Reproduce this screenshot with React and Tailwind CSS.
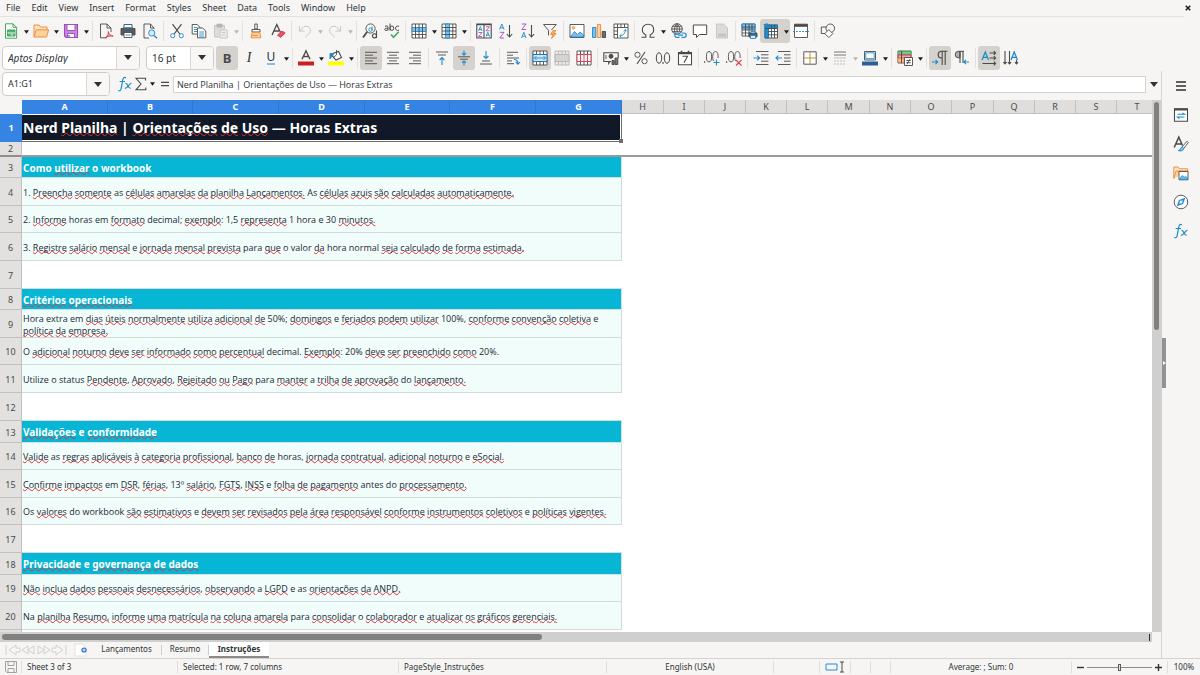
import React from "react";

const D = "#4a4a48";
const B = "#1e8bcd";
const L = "#83beec";
const O = "#ed8733";
const G = "#c4c2c0";

function Icon({ children, box = 16 }) {
  return (
    <svg
      viewBox={`0 0 ${box} ${box}`}
      className="size-4 shrink-0 overflow-visible"
      fill="none"
      stroke={D}
      strokeWidth="0.9"
      aria-hidden="true"
    >
      {children}
    </svg>
  );
}

const icons = {
  newDoc: (
    <Icon>
      <path d="M2.5.8H10L13.6 4.4V15.2H2.5Z" fill="#fff" stroke="#2f9e4f" />
      <path d="M10 .8V4.4H13.6" stroke="#2f9e4f" />
      <path d="M4.5 7H12V13H4.5Z" fill="#54b46b" stroke="#2f9e4f" />
      <path d="M4.5 10H12" stroke="#fff" />
      <path d="M7.5 12H10" stroke="#fff" />
    </Icon>
  ),
  open: (
    <Icon>
      <path d="M1 14V2H6L7.5 4H14V7" fill="#fde3c2" stroke={O} />
      <path d="M1 14L3.2 6.8H15.6L13.6 14Z" fill="#fbd29b" stroke={O} />
    </Icon>
  ),
  save: (
    <Icon>
      <path d="M1.5 1.5H14.5V14.5H3L1.5 13Z" fill="#c988dd" stroke="#9a4bb8" strokeWidth="1.1" />
      <path d="M4 1.5H12V7.5H4Z" fill="#fff" stroke="#9a4bb8" />
      <path d="M4.5 10.5H11.5V14.5H4.5Z" fill="#fff" stroke="#9a4bb8" />
      <path d="M6 12V14" stroke="#9a4bb8" strokeWidth="1.3" />
    </Icon>
  ),
  pdf: (
    <Icon>
      <path d="M8.8 14.8H2.5V1H9L13 5V9M9 1V5H13" />
      <path d="M7 15C10 13 10.5 10.5 10.3 8.5C11 11.5 12.5 13 15.2 13C12.5 12.6 9.5 13.2 7 15Z" stroke="#d9374a" fill="#f3a6ae" />
    </Icon>
  ),
  print: (
    <Icon>
      <path d="M4 1.5H12V6H4Z" fill="#fff" />
      <path d="M1 5.5H15V12H1Z" fill="#57575a" />
      <path d="M3 4.8H13" stroke={B} strokeWidth="1.3" />
      <path d="M4 9.5H12V14.5H4Z" fill="#fff" />
      <path d="M5.5 12H10.5" stroke={B} />
    </Icon>
  ),
  preview: (
    <Icon>
      <path d="M12 6V5L8.5 1H2V15H7M8.5 1V5H12" />
      <circle cx="9.7" cy="10" r="3.1" stroke={B} fill="#d7ecfa" />
      <path d="M12 12.4L15 15.3" stroke={B} strokeWidth="1.4" />
    </Icon>
  ),
  cut: (
    <Icon>
      <path d="M3.5 1.2L10.8 11M12.5 1.2L5.2 11" strokeWidth="1.2" />
      <circle cx="3.7" cy="12.7" r="2.1" stroke={B} />
      <circle cx="12.3" cy="12.7" r="2.1" stroke={B} />
    </Icon>
  ),
  copy: (
    <Icon>
      <path d="M6 11H1.2V1.5H6L9 4.3V5" fill="#fff" />
      <path d="M3 4.5H6M3 6.5H6M3 8.5H6" stroke={B} />
      <path d="M6.5 5H11.5L14.8 8V14.8H6.5Z" fill="#fff" />
      <path d="M8.2 9H13M8.2 11H13M8.2 13H13" stroke={B} />
    </Icon>
  ),
  paste: (
    <Icon>
      <path d="M6 14H1.5V2.5H11.5V6" fill="#dedddb" stroke={G} />
      <path d="M4 1.2H9V4H4Z" fill="#b8b6b4" stroke="#b0aeac" />
      <path d="M7 7H14.2V15H7Z" fill="#efeeec" stroke={G} />
      <path d="M8.8 9.5H12.5M8.8 12H12.5" stroke={G} />
    </Icon>
  ),
  clone: (
    <Icon>
      <path d="M6.8 1H9.2V6H6.8ZM4 6.5H12V9H4Z" fill="#fff" />
      <path d="M4.2 9.3H11.8L12.8 14.8H3Z" fill="#fbd29b" stroke={O} />
      <path d="M4.5 12.5H10" stroke={O} />
    </Icon>
  ),
  clearFormat: (
    <Icon>
      <path d="M2 12L6.8 1.5L10.5 9.5M4 8H9" strokeWidth="1.3" />
      <path d="M7.5 12.2L12 8L15.2 10L10.6 14.4Z" fill="#e25563" stroke="#d9374a" />
    </Icon>
  ),
  undo: (
    <Icon>
      <path d="M2.5 3V8H7.5M2.5 8L6.5 4.2C9.5 2 13.5 4 13.5 7.5C13.5 10 11 11.5 8 14.5" stroke={G} />
    </Icon>
  ),
  redo: (
    <Icon>
      <path d="M13.5 3V8H8.5M13.5 8L9.5 4.2C6.5 2 2.5 4 2.5 7.5C2.5 10 5 11.5 8 14.5" stroke={G} />
    </Icon>
  ),
  find: (
    <Icon>
      <circle cx="8.5" cy="5.5" r="4.6" />
      <path d="M5.2 8.8L1 14.5" strokeWidth="1.8" />
      <path d="M10 3.5V7.8M10 6A1.6 1.8 0 1 1 7 6A1.6 1.8 0 0 1 10 6" stroke={B} />
      <path d="M14.5 7.5V15M14.5 12.8A2 2.1 0 1 1 10.5 12.8A2 2.1 0 0 1 14.5 12.8" strokeWidth="1.1" />
    </Icon>
  ),
  spell: (
    <Icon>
      <path d="M1 3.4C3 2.4 4 3 4 4.4V7.4M4 5.2C2 5 .8 5.4 .8 6.4C.8 7.8 3 7.8 4 6.4M6 .5V7.5M6 5.2A1.9 2.2 0 1 1 9.8 5.2A1.9 2.2 0 0 1 6 5.2M15 3.3C13 2.5 11.6 3.5 11.6 5.2C11.6 7 13 8 15 7.1" strokeWidth="1" />
      <path d="M7 11.5L9.5 14.3L14.8 8.8" stroke="#3fae5b" strokeWidth="1.6" />
    </Icon>
  ),
  row: (
    <Icon>
      <path d="M1 1H15V15H1Z" fill="#fff" />
      <path d="M1 4.5H15V8.5H1Z" fill={L} stroke={B} />
      <path d="M1 11.5H15M4.5 1V15M8 1V15M11.5 1V15" />
    </Icon>
  ),
  col: (
    <Icon>
      <path d="M1 1H15V15H1Z" fill="#fff" />
      <path d="M4.5 1H8.5V15H4.5Z" fill={L} stroke={B} />
      <path d="M11.8 1V15M1 4.5H15M1 8H15M1 11.5H15" />
    </Icon>
  ),
  sort: (
    <Icon>
      <path d="M.8 1H15.2V15H.8ZM8 1V15M.8 1.8H15.2" strokeWidth="1.1" fill="#fff" />
      <path d="M2.5 8L4.3 3.5L6 8M3 6.5H5.6M10 13.6L11.8 9.2L13.6 13.6M10.5 12.2H13" stroke={B} />
      <path d="M2.5 9.5H6L2.5 13.6H6M10 3.8H13.5L10 7.8H13.5" stroke="#a34ab8" />
    </Icon>
  ),
  asc: (
    <Icon>
      <path d="M1.5 6.5L3.8 1L6 6.5M2.3 4.8H5.2" stroke={B} />
      <path d="M1.8 9.3H6L1.8 15H6.2" stroke="#a34ab8" />
      <path d="M11.5 2V14M8.8 11L11.5 14L14.2 11" strokeWidth="1.1" />
    </Icon>
  ),
  desc: (
    <Icon>
      <path d="M1.8 1H6L1.8 6.5H6.2" stroke="#a34ab8" />
      <path d="M1.5 15L3.8 9.3L6 15M2.3 13.2H5.2" stroke={B} />
      <path d="M11.5 2V14M8.8 11L11.5 14L14.2 11" strokeWidth="1.1" />
    </Icon>
  ),
  filter: (
    <Icon>
      <path d="M6.5 12.5V7.3L1.5 1.5H14.3L9.5 7" />
      <path d="M11 7.5L8.5 11.5H11L9.5 15.5L14 10.5H11.5L13.8 7.5Z" fill="#f9b467" stroke={O} />
    </Icon>
  ),
  image: (
    <Icon>
      <path d="M1 1.5H15V14.5H1Z" fill="#fff" />
      <path d="M1.5 14L5.5 8.5L8.5 11.5L11 9L14.5 12V14Z" fill={L} stroke={B} />
      <circle cx="4.5" cy="4.8" r="1.3" fill="#fbd29b" stroke={O} />
    </Icon>
  ),
  chart: (
    <Icon>
      <path d="M1.5 4.5H4.8V14.5H1.5Z" fill={L} stroke={B} />
      <path d="M6.3 1.5H9.6V14.5H6.3Z" fill="#fbd29b" stroke={O} />
      <path d="M11.2 8.5H14.5V14.5H11.2Z" fill="#6a6a6a" />
    </Icon>
  ),
  pivot: (
    <Icon>
      <path d="M1 1H15V15H1ZM4.5 1V15M1 4.5H15M8 1V4.5M11.5 1V4.5M1 8H4.5M1 11.5H4.5" fill="#fff" />
      <path d="M7 12.8C10.5 12.8 12.3 10 12.3 6.8M10.6 8.3L12.3 6.4L14 8.3M8.6 11L6.7 12.8L8.6 14.4" stroke={B} />
    </Icon>
  ),
  omega: (
    <Icon>
      <path d="M1.5 14.3H5.8V12C3.5 10.8 2.3 9 2.3 6.8C2.3 3.5 4.6 1.3 8 1.3S13.7 3.5 13.7 6.8C13.7 9 12.5 10.8 10.2 12V14.3H14.5" strokeWidth="1.1" />
    </Icon>
  ),
  link: (
    <Icon>
      <circle cx="7" cy="6" r="5.3" />
      <path d="M1.7 6H12.3M2.5 3.3H11.5M2.5 8.7H11M7 .7V9M7 .7C3.5 4 4.5 9 5 10M7 .7C9.8 3.4 9.8 6 9.5 8" />
      <path d="M9.5 10H7A2 2 0 0 0 7 14.3H9.5M11.5 10H14A2 2 0 0 1 14 14.3H11.5M8 12.2H13" stroke={B} strokeWidth="1.2" />
    </Icon>
  ),
  comment: (
    <Icon>
      <path d="M1.3 2H14.7V11.5H7.5L4.5 14.5V11.5H1.3Z" fill="#fff" strokeWidth="1" />
    </Icon>
  ),
  header: (
    <Icon>
      <path d="M2.5 1H9.5L13.5 5V15H2.5Z" fill="#dddbd9" stroke={G} />
      <path d="M4.5 11H11.5V13.2H4.5Z" fill="#c8c6c4" stroke={G} />
    </Icon>
  ),
  printArea: (
    <Icon>
      <path d="M1 1H14V13H1Z" fill="#fff" />
      <path d="M1 1H14V6H1Z" fill={L} stroke={B} />
      <path d="M1 4H14M1 7H14M1 10H14M4.5 1V13M8 1V13M11 1V13" />
      <path d="M8 10H16V14H8Z" fill="#5c5c5c" />
      <path d="M9.5 12.5H14.5V15.5H9.5ZM9.8 8.5H14V10H9.8Z" fill="#d7ecfa" stroke={B} />
    </Icon>
  ),
  freeze: (
    <Icon>
      <path d="M2 2H14.5V15H2Z" fill="#fff" />
      <path d="M2 2H14.5V5.5H5.5V15H2Z" fill={B} stroke="#1a6fae" />
      <path d="M5.5 8.5H14.5M5.5 11.8H14.5M8.5 2V15M11.5 2V15M2 5.5H14.5" />
      <path d="M.5 1.5H5M3 0V5M1 3.5L5 .5" stroke={B} />
    </Icon>
  ),
  split: (
    <Icon>
      <path d="M1.5 1.2H14.5V14.5H1.5Z" fill="#fff" />
      <path d="M1.5 2.5H14.5" strokeWidth="2.6" />
      <path d="M0 8.5H16" stroke={B} strokeDasharray="2 1" />
    </Icon>
  ),
  shapes: (
    <Icon>
      <path d="M7 10.5H1.3V4H6.5" />
      <circle cx="10.3" cy="5.3" r="4.3" />
      <path d="M8.8 6.6L12.8 10.6L8.8 14.6L4.8 10.6Z" fill="#fff" />
    </Icon>
  ),
  fontColor: (
    <Icon>
      <path d="M4 9.3L8 .8L12 9.3M5.4 6.5H10.6" strokeWidth="1.4" />
      <path d="M0 13.5H16" stroke="#c9211e" strokeWidth="4" />
    </Icon>
  ),
  highlight: (
    <Icon>
      <path d="M5 3.5L10.5 1.5L13.5 7.5L8 10L4.5 6Z" fill="#fff" strokeWidth="1.1" />
      <path d="M8.5 4.8V0M8.5 4.8L5 8" />
      <path d="M2 9V3.5H5V5.5C3.6 6 3 7.5 2 9Z" fill={B} stroke={B} />
      <path d="M0 13.5H16" stroke="#ffff00" strokeWidth="4" />
    </Icon>
  ),
  left: (
    <Icon>
      <path d="M2 2.3H14M2 5.2H10M2 8H14M2 10.9H10M2 13.7H14" />
    </Icon>
  ),
  center: (
    <Icon>
      <path d="M2 2.3H14M4 5.2H12M2 8H14M4 10.9H12M2 13.7H14" />
    </Icon>
  ),
  right: (
    <Icon>
      <path d="M2 2.3H14M6 5.2H14M2 8H14M6 10.9H14M2 13.7H14" />
    </Icon>
  ),
  top: (
    <Icon>
      <path d="M2 2H14M4 5H12" />
      <path d="M8 15V7.5M5.6 10L8 7.5L10.4 10" stroke={B} strokeWidth="1.1" />
    </Icon>
  ),
  middle: (
    <Icon>
      <path d="M2 6.8H14M4 9.2H12" />
      <path d="M8 .5V5M6 3.2L8 5.2L10 3.2M8 15.5V11M6 12.8L8 10.8L10 12.8" stroke={B} strokeWidth="1.1" />
    </Icon>
  ),
  bottom: (
    <Icon>
      <path d="M4 11H12M2 14H14" />
      <path d="M8 1V8.5M5.6 6L8 8.5L10.4 6" stroke={B} strokeWidth="1.1" />
    </Icon>
  ),
  wrap: (
    <Icon>
      <path d="M2 2.3H13M2 5.2H8M2 8H14M2 10.9H7M2 13.7H9" />
      <path d="M9 9.5C12 9.5 13 11 13 14M10.8 12L13 14.3L15 12" stroke={B} strokeWidth="1.1" />
    </Icon>
  ),
  merge: (
    <Icon>
      <path d="M1 1H15V15H1ZM1 4.5H15M1 11.5H15M4.5 1V4.5M8 1V4.5M11.5 1V4.5M4.5 11.5V15M8 11.5V15M11.5 11.5V15" fill="#fff" />
      <path d="M1 4.5H15V11.5H1Z" fill="#cfe6f8" stroke="#1a6fae" />
      <path d="M2.5 8H13.5M4.5 6L2.5 8L4.5 10M11.5 6L13.5 8L11.5 10" stroke={B} />
    </Icon>
  ),
  mergeCells: (
    <Icon>
      <path d="M1 1H15V15H1ZM1 4.5H15M1 11.5H15M4.5 1V4.5M8 1V4.5M11.5 1V4.5M4.5 11.5V15M8 11.5V15M11.5 11.5V15" fill="#eceae8" stroke="#b9b7b5" />
      <path d="M1 4.5H15V11.5H1Z" fill="#d5d3d1" stroke="#b9b7b5" />
    </Icon>
  ),
  unmerge: (
    <Icon>
      <path d="M1 1H15V15H1ZM1 4.5H15M1 11.5H15M4.5 1V4.5M8 1V4.5M11.5 1V4.5M4.5 11.5V15M8 11.5V15M11.5 11.5V15" fill="#fff" />
      <path d="M1 4.5H15V11.5H1ZM4.5 4.5V11.5M8 4.5V11.5M11.5 4.5V11.5" stroke="#d9374a" fill="#fff" />
    </Icon>
  ),
  currency: (
    <Icon>
      <path d="M8 11.5H.8V2.8H15.2V8" strokeWidth="1.1" />
      <circle cx="8" cy="6.3" r="2" fill={D} />
      <path d="M3 5V9M9 14.5V10.5H11.2V14.5ZM12 14.5V8H14.8V14.5ZM5.5 14.5V11.5H8" fill="#77767b" />
    </Icon>
  ),
  percent: (
    <Icon>
      <circle cx="4.5" cy="4.8" r="2.6" />
      <circle cx="11.5" cy="11.2" r="2.6" />
      <path d="M12 2L4 14" strokeWidth="1.1" />
    </Icon>
  ),
  number: (
    <Icon>
      <ellipse cx="4" cy="8" rx="2.7" ry="5.3" strokeWidth="1" />
      <ellipse cx="12" cy="8" rx="2.7" ry="5.3" strokeWidth="1" />
      <path d="M8 12V14" strokeWidth="1.1" />
    </Icon>
  ),
  date: (
    <Icon>
      <path d="M1.5 2.5H14.5V14.8H1.5Z" fill="#fff" strokeWidth="1.1" />
      <path d="M1.5 3.5H14.5M4.5 .8V3M11.5 .8V3" strokeWidth="1.6" />
      <path d="M5.5 6.3H10.5L7 12.8" strokeWidth="1.1" />
    </Icon>
  ),
  addDec: (
    <Icon>
      <ellipse cx="5" cy="6.7" rx="2.6" ry="5.2" />
      <path d="M9.5 11C8 8 8.5 1.5 11.5 1.5C13.8 1.5 14.4 5 14 8M.7 11V13" />
      <path d="M12.5 9.5V15.5M9.5 12.5H15.5" stroke={B} strokeWidth="1.1" />
    </Icon>
  ),
  delDec: (
    <Icon>
      <ellipse cx="5" cy="6.7" rx="2.6" ry="5.2" />
      <path d="M9.5 11C8 8 8.5 1.5 11.5 1.5C13.8 1.5 14.4 5 14 8M.7 11V13" />
      <path d="M10 10L15.5 15.5M15.5 10L10 15.5" stroke="#e0404f" strokeWidth="1.1" />
    </Icon>
  ),
  indent: (
    <Icon>
      <path d="M3 1.5H15.5M8 4.8H15.5M8 8H15.5M8 11.2H15.5M3 14.5H15.5" />
      <path d="M.5 8H6.5M4.2 5.7L6.5 8L4.2 10.3" stroke={B} strokeWidth="1.1" />
    </Icon>
  ),
  outdent: (
    <Icon>
      <path d="M3 1.5H15.5M9 4.8H15.5M9 8H15.5M9 11.2H15.5M3 14.5H15.5" />
      <path d="M7 8H1M3.3 5.7L1 8L3.3 10.3" stroke={B} strokeWidth="1.1" />
    </Icon>
  ),
  borders: (
    <Icon>
      <path d="M1.8 1.8H14.2V14.2H1.8Z" fill="#fff" />
      <path d="M8 1.8V14.2M1.8 8H14.2" stroke="#b8862d" />
    </Icon>
  ),
  lineStyle: (
    <Icon>
      <path d="M2 2H14M2 5H14" stroke="#a3a1a0" strokeWidth="1.4" />
      <path d="M2 8H14" stroke="#b9b7b5" />
      <path d="M2 11H14M2 14H14" stroke="#b9b7b5" strokeDasharray="2 1" />
    </Icon>
  ),
  borderColor: (
    <Icon>
      <path d="M2.5 1.5H13.5V10H2.5Z" fill="#fff" />
      <path d="M3.8 2.8H12.2V8.7H3.8Z" stroke={B} />
      <path d="M0 13.5H16" stroke="#2a6099" strokeWidth="4" />
    </Icon>
  ),
  cond: (
    <Icon>
      <path d="M1 1H14V13H1Z" fill="#fff" />
      <path d="M1 1.5H14V4.5H1Z" fill="#77c58a" stroke="#3fae5b" />
      <path d="M1 5H14V8H1Z" fill="#f5a3aa" stroke="#d9374a" />
      <path d="M1 9H7V12H1Z" fill="#fbd29b" stroke={O} />
      <path d="M4.5 1V13" />
      <path d="M7.5 7.5H15.5V15.5H7.5Z" fill="#fff" />
      <path d="M9.3 10.5H13.7M9.3 12.7H13.7M13 9L10 14.3" />
    </Icon>
  ),
  ltr: (
    <Icon>
      <path d="M15.5 1.3H9A3.4 3.4 0 0 0 9 8H10.2M10.2 1.3V15M13.2 1.3V15" strokeWidth="1.1" />
      <path d="M0 12H5.5M3.5 9.8L5.7 12L3.5 14.2" stroke={B} strokeWidth="1.1" />
    </Icon>
  ),
  rtl: (
    <Icon>
      <path d="M10 1.3H4.5A3.2 3.2 0 0 0 4.5 7.8H6V1.5" fill="#b5b3b0" strokeWidth="1" />
      <path d="M6 1.3V13M9 1.3V13" strokeWidth="1.1" />
      <path d="M15 12H10M12 9.8L9.8 12L12 14.2" stroke={B} strokeWidth="1.1" />
    </Icon>
  ),
  textH: (
    <Icon>
      <path d="M1 10L4.3 2L7.5 10M2.3 7.3H6.3" stroke={B} strokeWidth="1.3" />
      <path d="M8.5 3H14.5M8.5 8H14.5M1.5 13.5H14.5M12.8 1.2L14.6 3L12.8 4.8M12.8 6.2L14.6 8L12.8 9.8M12.8 11.7L14.6 13.5L12.8 15.3" strokeWidth="1.1" />
    </Icon>
  ),
  textV: (
    <Icon>
      <path d="M8 10L11.2 2L14.5 10M9.3 7.3H13.3" stroke={B} strokeWidth="1.3" />
      <path d="M2 1V14M6.5 1V14M13.5 10V14M.4 12.2L2 14L3.6 12.2M4.9 12.2L6.5 14L8.1 12.2M11.9 12.2L13.5 14L15.1 12.2" strokeWidth="1.1" />
    </Icon>
  ),
  fx: (
    <Icon>
      <path d="M9 1.8C6.8 .5 6 2.2 5.6 4.6L4.2 12.3C3.8 14.5 2.8 15.3 1.2 14.4M2.6 5.5H8" stroke={B} strokeWidth="1.2" />
      <path d="M8.5 7.5C11 6.8 10.8 12.8 13.8 12.2M14.5 7.3C12 7 10.5 12.8 7.8 12.4" stroke={B} strokeWidth="1.2" />
    </Icon>
  ),
  sum: (
    <Icon>
      <path d="M12.5 4.5V2.3H3L8 8L3 13.8H12.8V11.5" strokeWidth="1.1" />
    </Icon>
  ),
  equals: (
    <Icon>
      <path d="M4 6.3H12M4 9.7H12" strokeWidth="1.3" />
    </Icon>
  ),
  burger: (
    <Icon>
      <path d="M3 4H13M3 8H13M3 12H13" stroke="#2e2e2e" strokeWidth="1.5" />
    </Icon>
  ),
  props: (
    <Icon>
      <path d="M1.5 1.8H14.5V14.2H1.5Z" fill="#fff" strokeWidth="1.1" />
      <path d="M1.5 2.5H14.5" strokeWidth="2" />
      <path d="M4.5 7.3H11.5L9.5 6M11.5 10H4.5L6.5 11.5" stroke={B} strokeWidth="1.1" />
    </Icon>
  ),
  styles: (
    <Icon>
      <path d="M1.2 11.5L5.8 1.2L9.5 9.5M3 8H8.7" strokeWidth="1.5" />
      <path d="M9 11L14 5.2L15.3 6.5L11 12.2" fill="#fff" />
      <path d="M9.3 11L11 12.4C10.3 14.8 7.5 15.6 5.2 14.6C7.5 14.3 7.2 11.3 9.3 11Z" fill={L} stroke={B} />
    </Icon>
  ),
  gallery: (
    <Icon>
      <path d="M.8 13.5V2H5L6.5 3.8H14.5V6" fill="#fde3c2" stroke={O} />
      <path d="M.8 13.5L3 6H15.5" stroke={O} fill="#fbd29b" />
      <path d="M6 6.5H15V14.8H6Z" fill="#fff" />
      <path d="M6.5 14L9.3 10.5L11.2 12.5L12.5 11.3L14.5 13V14.3H6.5Z" fill={L} stroke={B} />
    </Icon>
  ),
  navigator: (
    <Icon>
      <circle cx="8" cy="8" r="6.8" fill="#fff" />
      <path d="M11.3 4.7L9.6 9.6L4.7 11.3L6.4 6.4Z" fill={L} stroke={B} strokeWidth="1.2" />
      <circle cx="8" cy="8" r=".9" fill="#fff" stroke="#fff" />
    </Icon>
  ),
  saveSmall: (
    <Icon>
      <path d="M2.5 2.5H13.5V13.5H4L2.5 12ZM5 2.5V6.5H11V2.5M5 13.5V9.5H11V13.5" stroke="#9a9896" />
    </Icon>
  ),
};

function Caret({ muted }) {
  return (
    <svg viewBox="0 0 6 4" className="h-[4px] w-[5px] shrink-0" aria-hidden="true">
      <path d="M0 0H6L3 4Z" fill={muted ? "#b9b7b5" : "#1c1c1c"} />
    </svg>
  );
}

function BigCaret() {
  return (
    <svg viewBox="0 0 8 5" className="h-[5px] w-2" aria-hidden="true">
      <path d="M0 0H8L4 5Z" fill="#2e3436" />
    </svg>
  );
}

function Tool({ name, label, pressed, caret, muted, children }) {
  return (
    <div className={`flex h-6 items-center rounded-[3px] ${pressed ? "bg-[#d5d1cd]" : ""}`}>
      <button type="button" aria-label={label} aria-pressed={pressed} className="flex h-6 w-[22px] items-center justify-center">
        {children || icons[name]}
      </button>
      {caret && (
        <button type="button" aria-label={`${label} options`} className="flex h-6 w-2 items-center justify-center pt-[2px]">
          <Caret muted={muted} />
        </button>
      )}
    </div>
  );
}

const Sep = () => <div className="mx-[2px] h-5 w-px shrink-0 bg-[#e3e1df]" />;

const toolbar1 = [
  [["newDoc", "New", 1], ["open", "Open", 1], ["save", "Save", 1]],
  [["pdf", "Export as PDF"], ["print", "Print"], ["preview", "Print Preview"]],
  [["cut", "Cut"], ["copy", "Copy"], ["paste", "Paste", 2]],
  [["clone", "Clone Formatting"], ["clearFormat", "Clear Formatting"]],
  [["undo", "Undo", 2], ["redo", "Redo", 2]],
  [["find", "Find and Replace"], ["spell", "Spelling"]],
  [["row", "Row", 1], ["col", "Column", 1]],
  [["sort", "Sort"], ["asc", "Sort Ascending"], ["desc", "Sort Descending"], ["filter", "AutoFilter"]],
  [["image", "Insert Image"], ["chart", "Insert Chart"], ["pivot", "Insert Pivot Table"]],
  [["omega", "Special Character", 1], ["link", "Insert Hyperlink"], ["comment", "Insert Comment"], ["header", "Headers and Footers"]],
  [["printArea", "Define Print Area"], ["freeze", "Freeze Rows and Columns", 1, true], ["split", "Split Window"]],
  [["shapes", "Show Draw Functions"]],
];

const toolbar2 = [
  [["fontColor", "Font Color", 1], ["highlight", "Background Color", 1]],
  [["left", "Align Left", 0, true], ["center", "Center Horizontally"], ["right", "Align Right"]],
  [["top", "Align Top"], ["middle", "Center Vertically", 0, true], ["bottom", "Align Bottom"]],
  [["wrap", "Wrap Text"]],
  [["merge", "Merge and Center", 0, true], ["mergeCells", "Merge Cells"], ["unmerge", "Unmerge Cells"]],
  [["currency", "Format as Currency", 1], ["percent", "Format as Percent"], ["number", "Format as Number"], ["date", "Format as Date"]],
  [["addDec", "Add Decimal Place"], ["delDec", "Delete Decimal Place"]],
  [["indent", "Increase Indent"], ["outdent", "Decrease Indent"]],
  [["borders", "Borders", 1], ["lineStyle", "Border Style", 2], ["borderColor", "Border Color", 1]],
  [["cond", "Conditional", 1]],
  [["ltr", "Left-To-Right", 0, true], ["rtl", "Right-To-Left"]],
  [["textH", "Text direction from left to right", 0, true], ["textV", "Text direction from top to bottom"]],
];

function Groups({ groups }) {
  return groups.map((group, i) => (
    <React.Fragment key={i}>
      {i > 0 && <Sep />}
      {group.map(([name, label, caret, pressed]) => (
        <Tool key={name} name={name} label={label} caret={caret > 0} muted={caret === 2} pressed={pressed} />
      ))}
    </React.Fragment>
  ));
}

function Combo({ label, value, className, inputClass = "", arrowClass }) {
  return (
    <div className={`flex shrink-0 overflow-hidden rounded-[4px] border border-[#cfccc9] bg-white ${className}`}>
      <input
        aria-label={label}
        defaultValue={value}
        className={`min-w-0 flex-1 bg-transparent px-[5px] outline-none ${inputClass}`}
      />
      <button
        type="button"
        aria-label={`${label} list`}
        className={`flex shrink-0 items-center justify-center border-l border-[#dad7d4] bg-[#f8f7f6] ${arrowClass}`}
      >
        <BigCaret />
      </button>
    </div>
  );
}

const menus = ["File", "Edit", "View", "Insert", "Format", "Styles", "Sheet", "Data", "Tools", "Window", "Help"];

const selectedCols = [
  ["A", "w-[86px]"],
  ["B", "w-[85px]"],
  ["C", "w-[86px]"],
  ["D", "w-[86px]"],
  ["E", "w-[85px]"],
  ["F", "w-[86px]"],
  ["G", "w-[86px]"],
];
const otherCols = [
  ["H", "w-[42px]"],
  ["I", "w-[41px]"],
  ["J", "w-[41px]"],
  ["K", "w-[41px]"],
  ["L", "w-[41px]"],
  ["M", "w-[42px]"],
  ["N", "w-[41px]"],
  ["O", "w-[41px]"],
  ["P", "w-[42px]"],
  ["Q", "w-[41px]"],
  ["R", "w-[41px]"],
  ["S", "w-[41px]"],
  ["T", "w-[41px]"],
];

// Words in [brackets] carry the spell checker's wavy underline.
const rows = [
  { n: 3, h: "h-[21px]", kind: "head", t: "Como [utilizar] o workbook" },
  { n: 4, h: "h-7", t: "1. [Preencha] [somente] as [células] [amarelas] [da] [planilha] [Lançamentos.] As [células] [azuis] [são] [calculadas] [automaticamente.]" },
  { n: 5, h: "h-[27px]", t: "2. [Informe] horas em [formato] decimal; [exemplo]: 1,5 [representa] 1 hora e 30 [minutos.]" },
  { n: 6, h: "h-7", t: "3. [Registre] [salário] [mensal] e [jornada] [mensal] [prevista] para [que] o valor [da] hora normal [seja] [calculado] [de] [forma] [estimada.]" },
  { n: 7, h: "h-7", kind: "blank" },
  { n: 8, h: "h-[21px]", kind: "head", t: "[Critérios] [operacionais]" },
  { n: 9, h: "h-7", t: "Hora extra em [dias] [úteis] [normalmente] [utiliza] [adicional] [de] 50%; [domingos] e [feriados] [podem] [utilizar] 100%, [conforme] [convenção] [coletiva] e [política] [da] [empresa.]" },
  { n: 10, h: "h-[27px]", t: "O [adicional] [noturno] [deve] [ser] [informado] [como] [percentual] decimal. [Exemplo]: 20% [deve] [ser] [preenchido] [como] 20%." },
  { n: 11, h: "h-7", t: "Utilize o status [Pendente], [Aprovado], [Rejeitado] [ou] [Pago] para [manter] a [trilha] [de] [aprovação] do [lançamento.]" },
  { n: 12, h: "h-7", kind: "blank" },
  { n: 13, h: "h-[22px]", kind: "head", t: "[Validações] e [conformidade]" },
  { n: 14, h: "h-[27px]", t: "[Valide] as [regras] [aplicáveis] [à] [categoria] [profissional], [banco] [de] horas, [jornada] [contratual], [adicional] [noturno] e [eSocial.]" },
  { n: 15, h: "h-7", t: "[Confirme] [impactos] em [DSR], [férias], 13º [salário], [FGTS], [INSS] e [folha] [de] [pagamento] antes do [processamento.]" },
  { n: 16, h: "h-[27px]", t: "Os [valores] do workbook [são] [estimativos] e [devem] [ser] [revisados] [pela] [área] [responsável] [conforme] [instrumentos] [coletivos] e [políticas] [vigentes.]" },
  { n: 17, h: "h-7", kind: "blank" },
  { n: 18, h: "h-[22px]", kind: "head", t: "[Privacidade] e [governança] [de] [dados]" },
  { n: 19, h: "h-[27px]", t: "[Não] [inclua] [dados] [pessoais] [desnecessários], [observando] a [LGPD] e as [orientações] [da] [ANPD.]" },
  { n: 20, h: "h-7", t: "Na [planilha] [Resumo,] [informe] [uma] [matrícula] [na] [coluna] [amarela] para [consolidar] o [colaborador] e [atualizar] [os] [gráficos] [gerenciais.]" },
  { n: "", h: "h-7", kind: "blank" },
];

function Checked({ text }) {
  return text.split(/(\[[^\]]+\])/).map((part, i) =>
    part[0] === "[" ? (
      <span
        key={i}
        className="underline decoration-[#dc3238] decoration-wavy decoration-1 underline-offset-[-1px] [text-decoration-skip-ink:none]"
      >
        {part.slice(1, -1)}
      </span>
    ) : (
      <React.Fragment key={i}>{part}</React.Fragment>
    )
  );
}

const rowHead = "border-r border-b border-[#c3c1bf] bg-[#e3e1df] p-0 pt-[2px] text-center font-normal text-[#4a4a4a]";

function Sheet() {
  return (
    <table className="w-[1158px] table-fixed border-separate border-spacing-0 text-[9px] leading-3">
      <colgroup>
        <col className="w-[22px]" />
        {[...selectedCols, ...otherCols].map(([c, w]) => (
          <col key={c} className={w} />
        ))}
      </colgroup>
      <thead>
        <tr className="h-[14px]">
          <td className="bg-[#f6f5f4] p-0" />
          {selectedCols.map(([c]) => (
            <th key={c} scope="col" className="border-r border-[#2f77cf] bg-[#3584e4] p-0 font-bold text-white">
              {c}
            </th>
          ))}
          {otherCols.map(([c]) => (
            <th key={c} scope="col" className="border-r border-b border-[#c3c1bf] bg-[#dfdedd] p-0 font-normal text-[#4a4a4a]">
              {c}
            </th>
          ))}
        </tr>
      </thead>
      <tbody>
        <tr className="h-7">
          <th scope="row" className="bg-[#3584e4] p-0 text-center font-bold text-white">1</th>
          <td colSpan={7} className="relative h-7 border-r border-b border-[#6e6e6e] bg-[#111827] p-0">
            <div className="flex h-[27px] items-center border border-l-0 border-white pl-px text-[14px] leading-5 font-bold whitespace-nowrap text-white">
              <span>
                <Checked text="Nerd [Planilha] | [Orientações] [de] [Uso] — Horas Extras" />
              </span>
            </div>
            <span className="absolute -right-[2px] -bottom-[2px] size-1 bg-[#6e6e6e]" />
          </td>
          <td colSpan={13} className="p-0" />
        </tr>
        <tr className="h-[15px]">
          <th scope="row" className="border-r border-b-2 border-r-[#c3c1bf] border-b-[#8e8e8e] bg-[#e3e1df] p-0 text-center font-normal text-[#4a4a4a]">2</th>
          <td colSpan={20} className="border-b-2 border-[#9a9a9a] p-0" />
        </tr>
        {rows.map(({ n, h, kind, t }, i) => (
          <tr key={i} className={h}>
            <th scope="row" className={rowHead}>{n}</th>
            {kind === "head" && (
              <td colSpan={7} className="border-r border-b border-[#cfe3e2] bg-[#06b6d4] p-0 pt-px pl-px text-[10px] font-bold whitespace-nowrap text-white">
                <Checked text={t} />
              </td>
            )}
            {kind === "blank" && <td colSpan={7} className="border-b border-[#d4dbda] p-0" />}
            {!kind && (
              <td colSpan={7} className="border-r border-b border-[#cfdcda] bg-[#f0fdfa] p-0 pt-[2px] pl-px font-['Open_Sans',sans-serif] text-[#1f2937]">
                <Checked text={t} />
              </td>
            )}
            <td colSpan={13} className="p-0" />
          </tr>
        ))}
      </tbody>
    </table>
  );
}

function SheetNav() {
  return (
    <svg viewBox="0 0 62 12" className="h-3 w-[62px]" fill="none" stroke="#d2d0ce" aria-hidden="true">
      <path d="M1 1V11M11 1L4 6L11 11V8H15V4H11Z" />
      <path d="M23 2L17 6L23 10ZM29 2L23 6L29 10Z" />
      <path d="M33 2L39 6L33 10ZM39 2L45 6L39 10Z" />
      <path d="M61 1V11M51 1L58 6L51 11V8H47V4H51Z" />
    </svg>
  );
}

const statusCell = "flex h-3 items-center border-l border-[#e0dedc] px-[5px] whitespace-nowrap";

export default function App() {
  return (
    <div className="flex h-screen min-h-0 flex-col overflow-hidden bg-[#f6f5f4] font-['Noto_Sans','Open_Sans',sans-serif] text-[9px] leading-3 text-[#2e3436]">
      <nav className="flex h-4 shrink-0 items-center justify-between pr-[6px] pl-[6px]">
        <div className="flex gap-[11px]">
          {menus.map((m) => (
            <button key={m} type="button">{m}</button>
          ))}
        </div>
        <button type="button" aria-label="Close document" className="flex size-3 items-center justify-center">
          <svg viewBox="0 0 8 8" className="size-[6px]" aria-hidden="true">
            <path d="M1 1L7 7M7 1L1 7" stroke="#1c1c1c" strokeWidth="2" />
          </svg>
        </button>
      </nav>
      <div className="mr-4 h-px shrink-0 bg-[#e3e1df]" />

      <div className="flex h-[27px] shrink-0 items-center">
        <Groups groups={toolbar1} />
      </div>

      <div className="flex h-[27px] shrink-0 items-center pl-[2px]">
        <Combo label="Font name" value="Aptos Display" className="mr-[6px] h-6 w-[138px]" inputClass="text-[10px] italic" arrowClass="w-[23px]" />
        <Combo label="Font size" value="16 pt" className="h-6 w-[68px]" inputClass="text-[10px]" arrowClass="w-[23px]" />
        <div className="w-[2px] shrink-0" />
        <Tool label="Bold" pressed>
          <span className="text-[13px] leading-4 font-bold text-[#4a4a48]">B</span>
        </Tool>
        <Tool label="Italic">
          <span className="font-['Liberation_Serif',serif] text-[14px] leading-4 italic">I</span>
        </Tool>
        <Tool label="Underline" caret>
          <span className="border-b-2 border-[#83beec] text-[12px] leading-3">U</span>
        </Tool>
        <Sep />
        <Groups groups={toolbar2} />
      </div>

      <div className="flex min-h-0 flex-1">
        <main className="flex min-w-0 flex-1 flex-col">
          <div className="flex h-[29px] shrink-0 items-center pb-[3px] pl-[2px]">
            <Combo label="Name box" value="A1:G1" className="h-6 w-[108px]" arrowClass="w-[23px]" />
            <div className="flex w-[63px] shrink-0 items-center justify-end">
              <button type="button" aria-label="Function Wizard" className="flex w-4 justify-center">{icons.fx}</button>
              <button type="button" aria-label="Select Function" className="flex w-[15px] justify-center">{icons.sum}</button>
              <span className="flex w-[9px] justify-center"><Caret /></span>
              <button type="button" aria-label="Formula" className="flex w-4 justify-center">{icons.equals}</button>
            </div>
            <input
              aria-label="Input line"
              defaultValue="Nerd Planilha | Orientações de Uso — Horas Extras"
              className="h-[17px] min-w-0 flex-1 border border-[#d5d2cf] bg-white px-[3px] font-['Open_Sans',sans-serif] outline-none"
            />
            <button type="button" aria-label="Expand Formula Bar" className="flex w-[15px] shrink-0 items-center justify-center">
              <BigCaret />
            </button>
          </div>

          <div className="flex min-h-0 flex-1">
            <div className="min-w-0 flex-1 overflow-hidden bg-white">
              <Sheet />
            </div>
            <div className="w-[9px] shrink-0 bg-[#cfcfcf] px-[2px] pt-[2px]">
              <div className="h-[43%] w-[5px] rounded-full bg-[#808080]" />
            </div>
          </div>
          <div className="flex h-[10px] shrink-0 pr-[9px]">
            <div className="flex flex-1 items-center justify-between bg-[#cfcfcf] px-[2px]">
              <div className="h-[6px] w-[47%] rounded-full bg-[#808080]" />
              <div className="h-[7px] w-px bg-[#2e2e2e]" />
            </div>
          </div>

          <div className="flex h-4 shrink-0 items-center text-[8px]">
            <button type="button" aria-label="Scroll sheets" className="ml-[5px] flex h-4 items-center"><SheetNav /></button>
            <button type="button" aria-label="Add sheet" className="ml-[6px] flex h-4 w-4 items-center justify-center">
              <svg viewBox="0 0 14 14" className="size-[14px]" aria-hidden="true">
                <path d="M1 1H8L12 4V13H1Z" fill="#fff" stroke="#dedcda" strokeWidth=".8" />
                <circle cx="10" cy="7" r="2.6" fill="#2a6fc0" />
                <path d="M10 5.4V8.6M8.4 7H11.6" stroke="#fff" strokeWidth=".9" />
              </svg>
            </button>
            <button type="button" className="ml-[3px] h-4 w-[69px] pb-[2px]">Lançamentos</button>
            <button type="button" className="flex h-4 w-12 items-center">
              <span className="flex h-[10px] w-full items-center justify-center border-x border-[#cfccc9] pb-[2px] leading-[10px]">Resumo</span>
            </button>
            <button type="button" className="h-4 w-[60px] border-b-2 border-[#8c8a88] bg-white font-bold">Instruções</button>
          </div>
        </main>

        <aside className="flex w-[39px] shrink-0 border-l border-[#d5d2cf]">
          <button type="button" aria-label="Hide sidebar" className="mt-[267px] flex h-[50px] w-[4px] shrink-0 items-center justify-center bg-[#929292]">
            <svg viewBox="0 0 3 4" className="h-1 w-[3px]" aria-hidden="true">
              <path d="M0 0L3 2L0 4Z" fill="#fff" />
            </svg>
          </button>
          <div className="flex flex-1 flex-col items-center gap-[13px] pt-[7px] pr-[4px]">
            {[
              ["burger", "Sidebar Settings"],
              ["props", "Properties"],
              ["styles", "Styles"],
              ["gallery", "Gallery"],
              ["navigator", "Navigator"],
              ["fx", "Functions"],
            ].map(([name, label]) => (
              <button key={name} type="button" aria-label={label}>{icons[name]}</button>
            ))}
          </div>
        </aside>
      </div>

      <footer className="grid h-[17px] shrink-0 grid-cols-[21px_156fr_221fr_208fr_167fr_46px_31px_20px_20px_181fr_96px_33px] items-center border-t border-[#d5d2cf] text-[8px]">
        <div className="flex items-center justify-center">{icons.saveSmall}</div>
        <div className={statusCell}>Sheet 3 of 3</div>
        <div className={statusCell}>Selected: 1 row, 7 columns</div>
        <div className={statusCell}>PageStyle_Instruções</div>
        <div className={`${statusCell} justify-center`}>English (USA)</div>
        <div className={statusCell} />
        <div className={statusCell}>
          <svg viewBox="0 0 20 12" className="h-3 w-5 shrink-0" fill="none" aria-hidden="true">
            <path d="M1 3H12V9H1Z" stroke={B} />
            <path d="M15 1H19M15 11H19M17 1V11" stroke={D} />
          </svg>
        </div>
        <div className={statusCell} />
        <div className={statusCell} />
        <div className={`${statusCell} justify-center`}>Average: ; Sum: 0</div>
        <div className="flex h-3 items-center gap-[3px] border-l border-[#e0dedc] px-[5px] text-[#2e3436]">
          <button type="button" aria-label="Zoom out" className="flex size-[7px] items-center">
            <svg viewBox="0 0 7 7" className="size-[7px]" aria-hidden="true"><path d="M0 3.5H7" stroke="#2e3436" strokeWidth="1.4" /></svg>
          </button>
          <input
            type="range"
            aria-label="Zoom"
            min="0"
            max="100"
            defaultValue="50"
            className="h-2 min-w-0 flex-1 appearance-none bg-[linear-gradient(#8c8a88,#8c8a88)] bg-[length:100%_1px] bg-center bg-no-repeat [&::-webkit-slider-thumb]:h-[7px] [&::-webkit-slider-thumb]:w-[3px] [&::-webkit-slider-thumb]:appearance-none [&::-webkit-slider-thumb]:border [&::-webkit-slider-thumb]:border-[#5c5a58] [&::-webkit-slider-thumb]:bg-[#e3e1df]"
          />
          <button type="button" aria-label="Zoom in" className="flex size-[7px] items-center">
            <svg viewBox="0 0 7 7" className="size-[7px]" aria-hidden="true"><path d="M0 3.5H7M3.5 0V7" stroke="#2e3436" strokeWidth="1.4" /></svg>
          </button>
        </div>
        <div className="flex h-3 items-center justify-center border-l border-[#e0dedc]">100%</div>
      </footer>
    </div>
  );
}
